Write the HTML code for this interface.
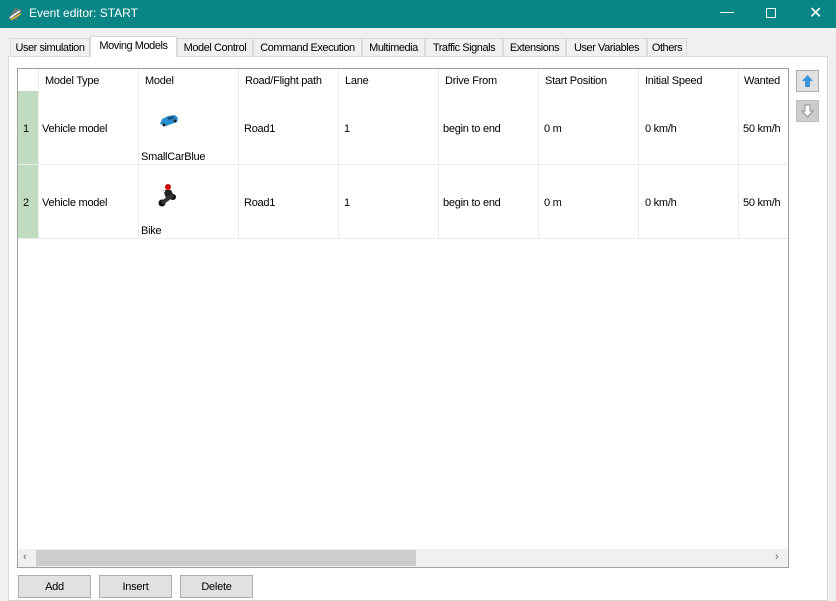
<!DOCTYPE html>
<html><head><style>
*{box-sizing:border-box;margin:0;padding:0}
body{width:836px;height:596px;overflow:hidden;background:#f0f0f0;font-family:"Liberation Sans",sans-serif;font-size:11px;color:#000;position:relative;letter-spacing:-0.25px}
.abs{position:absolute}
.title{left:0;top:0;width:836px;height:28px;background:#0a8585;color:#fff;font-size:12px;letter-spacing:0}
.tab{top:38px;height:18px;border:1px solid #d9d9d9;border-bottom:none;background:#f0f0f0;padding:3px 0 0 0;text-align:center;letter-spacing:-0.45px;white-space:nowrap}
.panel{left:8px;top:56px;width:820px;height:545px;background:#fff;border:1px solid #d9d9d9}
.grid{left:17px;top:68px;width:772px;height:500px;border:1px solid #a0a0a0;background:#fff;overflow:hidden}
.cell{position:absolute;font-size:11px}
.vl{position:absolute;width:1px;background:#ececec}
.hl{position:absolute;height:1px;background:#ececec}
.btn{top:575px;width:73px;height:23px;background:#e1e1e1;border:1px solid #adadad;text-align:center;padding-top:5px}
.sb{width:23px;height:22px;border:1px solid #adadad;background:#e1e1e1}
</style></head><body>
<div class="abs title">
<svg class="abs" style="left:7px;top:6px" width="16" height="16" viewBox="0 0 16 16"><path d="M1 13 L8 2 L15 4 L10 14 Z" fill="#6c7a7a"/><path d="M3 12 Q8 8 13 5" stroke="#fff" stroke-width="1.5" fill="none"/><path d="M4 14 Q9 10 14 8" stroke="#fc0" stroke-width="1" fill="none"/></svg>
<span class="abs" style="left:29px;top:6px">Event editor: START</span>
<span class="abs" style="left:720px;top:3px;font-size:14px">—</span>
<div class="abs" style="left:766px;top:8px;width:10px;height:10px;border:1px solid #fff"></div>
<span class="abs" style="left:809px;top:3px;font-size:16px">✕</span>
</div>
<div class="abs panel"></div>
<div class="abs tab" style="left:10px;width:80px">User simulation</div>
<div class="abs tab" style="left:90px;width:87px;top:36px;height:21px;background:#fff;z-index:2">Moving Models</div>
<div class="abs tab" style="left:177px;width:76px">Model Control</div>
<div class="abs tab" style="left:253px;width:109px">Command Execution</div>
<div class="abs tab" style="left:362px;width:63px">Multimedia</div>
<div class="abs tab" style="left:425px;width:78px">Traffic Signals</div>
<div class="abs tab" style="left:503px;width:63px">Extensions</div>
<div class="abs tab" style="left:566px;width:81px">User Variables</div>
<div class="abs tab" style="left:647px;width:40px">Others</div>

<div class="abs grid">
<div class="abs" style="left:0;top:22px;width:20px;height:148px;background:#c0dcc0"></div>
<div class="hl" style="left:0;top:95px;width:772px"></div>
<div class="hl" style="left:0;top:169px;width:772px"></div>
<div class="vl" style="left:20px;top:0;height:170px"></div>
<div class="vl" style="left:120px;top:0;height:170px"></div>
<div class="vl" style="left:220px;top:0;height:170px"></div>
<div class="vl" style="left:320px;top:0;height:170px"></div>
<div class="vl" style="left:420px;top:0;height:170px"></div>
<div class="vl" style="left:520px;top:0;height:170px"></div>
<div class="vl" style="left:620px;top:0;height:170px"></div>
<div class="vl" style="left:720px;top:0;height:170px"></div>
<div class="cell" style="left:27px;top:6px">Model Type</div>
<div class="cell" style="left:127px;top:6px">Model</div>
<div class="cell" style="left:227px;top:6px">Road/Flight path</div>
<div class="cell" style="left:327px;top:6px">Lane</div>
<div class="cell" style="left:427px;top:6px">Drive From</div>
<div class="cell" style="left:527px;top:6px">Start Position</div>
<div class="cell" style="left:627px;top:6px">Initial Speed</div>
<div class="cell" style="left:726px;top:6px">Wanted</div>

<div class="cell" style="left:5px;top:54px">1</div>
<div class="cell" style="left:24px;top:54px">Vehicle model</div>
<svg class="abs" style="left:140px;top:44px" width="22" height="16"><path d="M2 11 L4 6 L10 3 L17 2 L20 5 L19 9 L8 13 Z" fill="#2a8fcf"/><path d="M9 5 L15 3 L17 5 L11 7 Z" fill="#1a4f7a"/><circle cx="6" cy="12" r="1.5" fill="#222"/><circle cx="17" cy="8" r="1.5" fill="#222"/></svg>
<div class="cell" style="left:123px;top:82px">SmallCarBlue</div>
<div class="cell" style="left:226px;top:54px">Road1</div>
<div class="cell" style="left:326px;top:54px">1</div>
<div class="cell" style="left:425px;top:54px">begin to end</div>
<div class="cell" style="left:526px;top:54px">0 m</div>
<div class="cell" style="left:627px;top:54px">0 km/h</div>
<div class="cell" style="left:725px;top:54px">50 km/h</div>

<div class="cell" style="left:5px;top:128px">2</div>
<div class="cell" style="left:24px;top:128px">Vehicle model</div>
<svg class="abs" style="left:138px;top:113px" width="24" height="28"><circle cx="12" cy="5" r="3" fill="#c00"/><path d="M7 8 L15 8 L18 14 L10 16 Z" fill="#222"/><path d="M6 10 L9 9" stroke="#fff" stroke-width="2"/><circle cx="6" cy="21" r="3.5" fill="#111"/><circle cx="17" cy="15" r="3" fill="#111"/><path d="M6 21 L17 13" stroke="#333" stroke-width="4" fill="none"/></svg>
<div class="cell" style="left:123px;top:156px">Bike</div>
<div class="cell" style="left:226px;top:128px">Road1</div>
<div class="cell" style="left:326px;top:128px">1</div>
<div class="cell" style="left:425px;top:128px">begin to end</div>
<div class="cell" style="left:526px;top:128px">0 m</div>
<div class="cell" style="left:627px;top:128px">0 km/h</div>
<div class="cell" style="left:725px;top:128px">50 km/h</div>

<div class="abs" style="left:0;top:480px;width:772px;height:18px;background:#f0f0f0"></div>
<div class="abs" style="left:18px;top:481px;width:380px;height:16px;background:#cdcdcd"></div>
<span class="abs" style="left:5px;top:482px;color:#606060">‹</span>
<span class="abs" style="left:757px;top:482px;color:#606060">›</span>
</div>

<div class="abs sb" style="left:796px;top:70px"><svg width="21" height="20"><path d="M10.5 4 L16 10 L13 10 L13 16 L8 16 L8 10 L5 10 Z" fill="#3a94d8"/></svg></div>
<div class="abs sb" style="left:796px;top:100px;background:#cccccc;border-color:#bfbfbf"><svg width="21" height="20"><path d="M10.5 16 L16 10 L13 10 L13 4 L8 4 L8 10 L5 10 Z" fill="#fff" stroke="#909090"/></svg></div>

<div class="abs btn" style="left:18px">Add</div>
<div class="abs btn" style="left:99px">Insert</div>
<div class="abs btn" style="left:180px">Delete</div>
</body></html>
